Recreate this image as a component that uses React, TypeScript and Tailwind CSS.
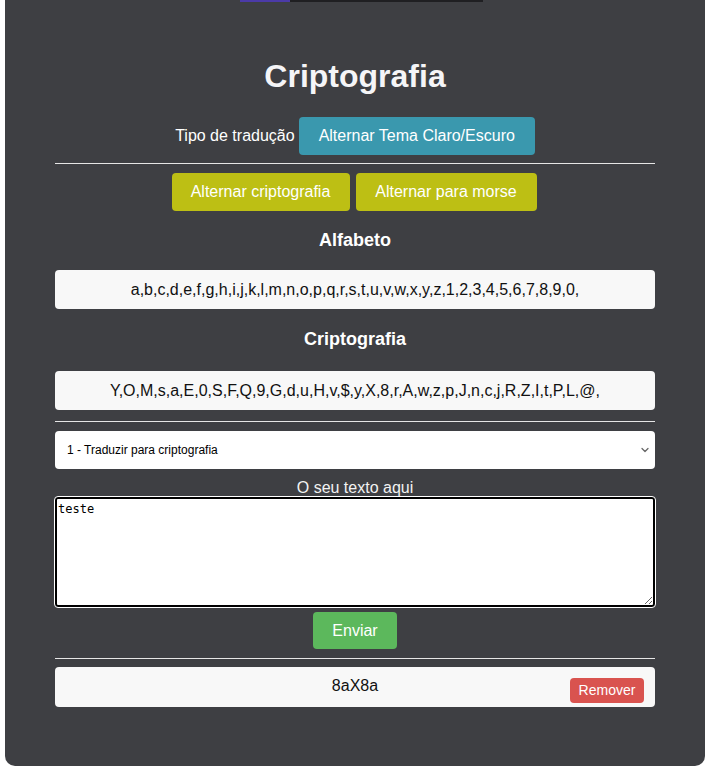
import { ChevronDown } from "lucide-react";

const alfabeto = "a,b,c,d,e,f,g,h,i,j,k,l,m,n,o,p,q,r,s,t,u,v,w,x,y,z,1,2,3,4,5,6,7,8,9,0,";
const cripto = "Y,O,M,s,a,E,0,S,F,Q,9,G,d,u,H,v,$,y,X,8,r,A,w,z,p,J,n,c,j,R,Z,I,t,P,L,@,";

export default function App() {
  return (
    <div className="min-h-screen bg-white px-[5px] font-['Liberation_Sans',Arial,sans-serif]">
      <div className="bg-[#3e3f43] rounded-b-[10px] h-[766px] px-[50px] text-white">
        <div className="flex h-[2px] ml-[185px] w-[243px]">
          <div className="w-[50px] bg-[#4b3aa8]" />
          <div className="flex-1 bg-[#1f1f22]" />
        </div>

        <h1 className="mt-[57px] text-center text-[32px] font-bold leading-[35px] text-[#f5f5f7]">
          Criptografia
        </h1>

        <div className="mt-[23px] flex items-center justify-center gap-[4px]">
          <span className="text-[16px]">Tipo de tradução</span>
          <button className="h-[38px] rounded-[4px] bg-[#3a98ae] px-[20px] text-[16px] text-white">
            Alternar Tema Claro/Escuro
          </button>
        </div>

        <hr className="mt-[8px] border-t border-[#e6e6e6]" />

        <div className="mt-[9px] flex justify-center gap-[6px] pr-[2px]">
          <button className="h-[38px] w-[178px] rounded-[4px] bg-[#bdbf14] text-[16px] text-white">
            Alternar criptografia
          </button>
          <button className="h-[38px] w-[181px] rounded-[4px] bg-[#bdbf14] text-[16px] text-white">
            Alternar para morse
          </button>
        </div>

        <h2 className="mt-[19px] text-center text-[18px] font-bold leading-[20px]">Alfabeto</h2>
        <div className="mt-[20px] flex h-[39px] items-center justify-center rounded-[4px] bg-[#f8f8f8] text-[16px] text-[#111]">
          {alfabeto}
        </div>

        <h2 className="mt-[20px] text-center text-[18px] font-bold leading-[20px]">Criptografia</h2>
        <div className="mt-[22px] flex h-[39px] items-center justify-center rounded-[4px] bg-[#f8f8f8] text-[16px] text-[#111]">
          {cripto}
        </div>

        <hr className="mt-[11px] border-t border-[#e6e6e6]" />

        <div className="relative mt-[9px] h-[38px]">
          <select
            defaultValue="1"
            className="h-full w-full appearance-none rounded-[4px] bg-white pl-[12px] text-[12px] text-black outline-none"
          >
            <option value="1">1 - Traduzir para criptografia</option>
            <option value="2">2 - Traduzir para texto</option>
          </select>
          <ChevronDown className="pointer-events-none absolute right-[4px] top-[13px] h-[12px] w-[12px] text-[#666]" strokeWidth={2.5} />
        </div>

        <p className="mt-[10px] text-center text-[16px] leading-[18px] text-[#f2f2f2]">O seu texto aqui</p>
        <textarea
          defaultValue="teste"
          className="block h-[110px] w-full rounded-[3px] border-2 border-black bg-white p-[1px] font-['DejaVu_Sans_Mono',monospace] text-[12px] text-black outline outline-1 outline-white"
        />

        <div className="mt-[5px] flex justify-center">
          <button className="h-[37px] w-[84px] rounded-[4px] bg-[#5cb85c] text-[16px] text-white">Enviar</button>
        </div>

        <hr className="mt-[9px] border-t border-[#e6e6e6]" />

        <div className="relative mt-[8px] flex h-[40px] items-center justify-center rounded-[4px] bg-[#f8f8f8] text-[16px] text-[#111]">
          <span className="-mt-[2px]">8aX8a</span>
          <button className="absolute right-[11px] top-[11px] h-[25px] w-[74px] rounded-[4px] bg-[#d9534f] text-[14px] text-white">
            Remover
          </button>
        </div>
      </div>
    </div>
  );
}
